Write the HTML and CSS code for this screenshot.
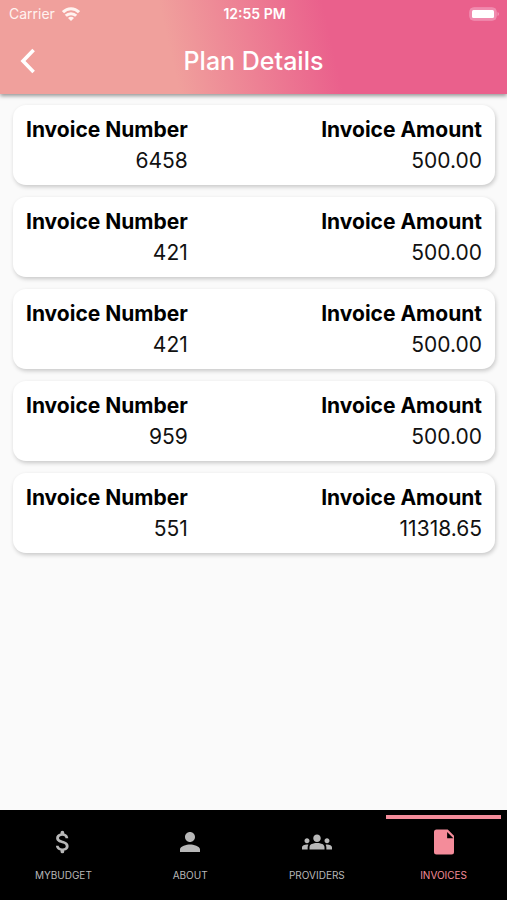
FILE: index.html
```html
<!DOCTYPE html>
<html lang="en">
<head>
  <meta charset="UTF-8" />
  <meta name="viewport" content="width=device-width, initial-scale=1" />
  <title>Plan Details</title>
  <link rel="stylesheet" href="styles.css">
</head>
<body>
  <header class="header">
    <div class="status-bar">
      <div class="carrier">
        <span>Carrier</span>
        <svg width="18" height="14" viewBox="0 0 18 14" fill="none" stroke="currentColor" stroke-width="3">
          <path d="M1 5.2C5.5 0.6 12.5 0.6 17 5.2" />
          <path d="M3.8 8.8C6.6 6 11.400 6 14.200 8.8" />
          <path d="M9 14L6 10.900C7.8 9.400 10.200 9.400 12 10.900Z" fill="currentColor" stroke="none" />
        </svg>
      </div>
      <time class="time">12:55 PM</time>
      <svg class="battery" width="31" height="14" viewBox="0 0 31 14">
        <rect x="0.7" y="0.7" width="26.6" height="12.6" rx="4" fill="#f08bae" stroke="#f08bae" />
        <rect x="3" y="3" width="22" height="8" rx="1.5" fill="#fff" />
        <path d="M28.6 5c1.6.6 1.6 3.4 0 4z" fill="#f3a3bf" />
      </svg>
    </div>
    <div class="app-bar">
      <button class="back" type="button" aria-label="Back">
        <svg width="16" height="26" viewBox="0 0 16 26" fill="none" stroke="currentColor" stroke-width="3.6">
          <path d="M13.6 2L3 13l10.600 11" />
        </svg>
      </button>
      <h1>Plan Details</h1>
    </div>
  </header>

  <main class="invoices">
    <dl class="card">
      <div><dt>Invoice Number</dt><dd>6458</dd></div>
      <div><dt>Invoice Amount</dt><dd>500.00</dd></div>
    </dl>
    <dl class="card">
      <div><dt>Invoice Number</dt><dd>421</dd></div>
      <div><dt>Invoice Amount</dt><dd>500.00</dd></div>
    </dl>
    <dl class="card">
      <div><dt>Invoice Number</dt><dd>421</dd></div>
      <div><dt>Invoice Amount</dt><dd>500.00</dd></div>
    </dl>
    <dl class="card">
      <div><dt>Invoice Number</dt><dd>959</dd></div>
      <div><dt>Invoice Amount</dt><dd>500.00</dd></div>
    </dl>
    <dl class="card">
      <div><dt>Invoice Number</dt><dd>551</dd></div>
      <div><dt>Invoice Amount</dt><dd>11318.65</dd></div>
    </dl>
  </main>

  <nav class="tabs">
    <a href="#mybudget">
      <svg viewBox="0 0 24 24"><path d="M11.8 10.900c-2.270-.59-3-1.200-3-2.150 0-1.090 1.010-1.850 2.700-1.850 1.780 0 2.440.85 2.500 2.100h2.210c-.07-1.720-1.120-3.300-3.210-3.810V4.500a1.500 1.500 0 0 0-3 0v.66c-1.940.42-3.500 1.680-3.500 3.610 0 2.310 1.910 3.460 4.700 4.130 2.500.6 3 1.480 3 2.410 0 .69-.49 1.790-2.700 1.790-2.060 0-2.870-.92-2.980-2.100h-2.200c.12 2.190 1.760 3.420 3.680 3.830v.67a1.500 1.500 0 0 0 3 0v-.65c1.950-.37 3.500-1.500 3.500-3.550 0-2.840-2.430-3.810-4.700-4.400z" /></svg>
      <span>MYBUDGET</span>
    </a>
    <a href="#about">
      <svg viewBox="0 0 24 24"><path d="M12 12c2.210 0 4-1.790 4-4s-1.790-4-4-4-4 1.790-4 4 1.790 4 4 4zm0 2c-2.670 0-8 1.340-8 4v2h16v-2c0-2.660-5.330-4-8-4z" /></svg>
      <span>ABOUT</span>
    </a>
    <a href="#providers">
      <svg viewBox="0 0 24 24"><path d="M12 12.750c1.630 0 3.070.39 4.240.9 1.080.48 1.760 1.560 1.760 2.730V18H6v-1.610c0-1.180.68-2.260 1.760-2.730 1.170-.52 2.610-.91 4.240-.91zM4 13c1.100 0 2-.9 2-2s-.9-2-2-2-2 .9-2 2 .9 2 2 2zm1.130 1.100C4.760 14.040 4.390 14 4 14c-.99 0-1.930.21-2.780.58C.48 14.900 0 15.620 0 16.430V18h4.500v-1.610c0-.83.23-1.610.63-2.290zM20 13c1.100 0 2-.9 2-2s-.9-2-2-2-2 .9-2 2 .9 2 2 2zm4 3.430c0-.81-.48-1.530-1.220-1.850C21.930 14.210 20.990 14 20 14c-.39 0-.76.04-1.130.1.4.68.63 1.460.63 2.290V18H24v-1.570zM12 6c1.660 0 3 1.340 3 3s-1.340 3-3 3-3-1.340-3-3 1.340-3 3-3z" /></svg>
      <span>PROVIDERS</span>
    </a>
    <a class="active" href="#invoices" aria-current="page">
      <svg viewBox="0 0 24 24"><path fill-rule="evenodd" d="M6 2h9l5 5v13a2 2 0 0 1-2 2H6a2 2 0 0 1-2-2V4a2 2 0 0 1 2-2zM14.500 4v5h5z" /></svg>
      <span>INVOICES</span>
    </a>
  </nav>
</body>
</html>
```

FILE: styles.css
```css
* {
  box-sizing: border-box;
}

body {
  margin: 0;
  min-height: 100vh;
  display: flex;
  flex-direction: column;
  font-family: Inter, "Liberation Sans", sans-serif;
  background: #fafafa;
  color: #111;
}

.header {
  color: #fff;
  background: linear-gradient(77deg, #f0a09c 34%, #ea608c 65%);
  box-shadow: 0 2px 4px rgba(0, 0, 0, 0.4);
}

.status-bar {
  display: grid;
  grid-template-columns: 1fr auto 1fr;
  align-items: center;
  height: 27px;
  padding: 0 7px 0 9px;
  font-size: 14px;
}

.carrier {
  display: flex;
  align-items: center;
  gap: 7px;
  color: #fff3f0;
}

.time {
  font-weight: 600;
}

.battery {
  justify-self: end;
}

.app-bar {
  display: grid;
  grid-template-columns: 56px 1fr 56px;
  align-items: center;
  height: 67px;
}

.back {
  display: flex;
  align-items: center;
  justify-content: center;
  height: 56px;
  padding: 0;
  border: 0;
  background: none;
  color: inherit;
  cursor: pointer;
}

h1 {
  margin: 0;
  text-align: center;
  font-size: 25px;
  line-height: 30px;
  font-weight: 500;
}

.invoices {
  flex: 1;
  display: flex;
  flex-direction: column;
  gap: 12px;
  padding: 11px 12px 12px 13px;
}

.card {
  display: flex;
  justify-content: space-between;
  margin: 0;
  padding: 9px 13px;
  border-radius: 13px;
  background: #fff;
  box-shadow: 1px 2px 4px rgba(0, 0, 0, 0.2);
  font-size: 21px;
  line-height: 31px;
  text-align: right;
}

.card dt {
  color: #000;
  font-weight: 700;
}

.card dd {
  margin: 0;
}

.tabs {
  display: grid;
  grid-template-columns: repeat(4, 1fr);
  height: 90px;
  padding-top: 5px;
  background: #000;
}

.tabs a {
  display: flex;
  flex-direction: column;
  align-items: center;
  gap: 11px;
  margin: 0 6px;
  padding-top: 8px;
  border-top: 4px solid transparent;
  color: #b8b8b8;
  font-size: 10px;
  line-height: 14px;
  text-decoration: none;
}

.tabs svg {
  width: 30px;
  height: 30px;
  fill: currentColor;
}

.tabs .active {
  border-color: #f48c9a;
  color: #f48c9a;
}
```
